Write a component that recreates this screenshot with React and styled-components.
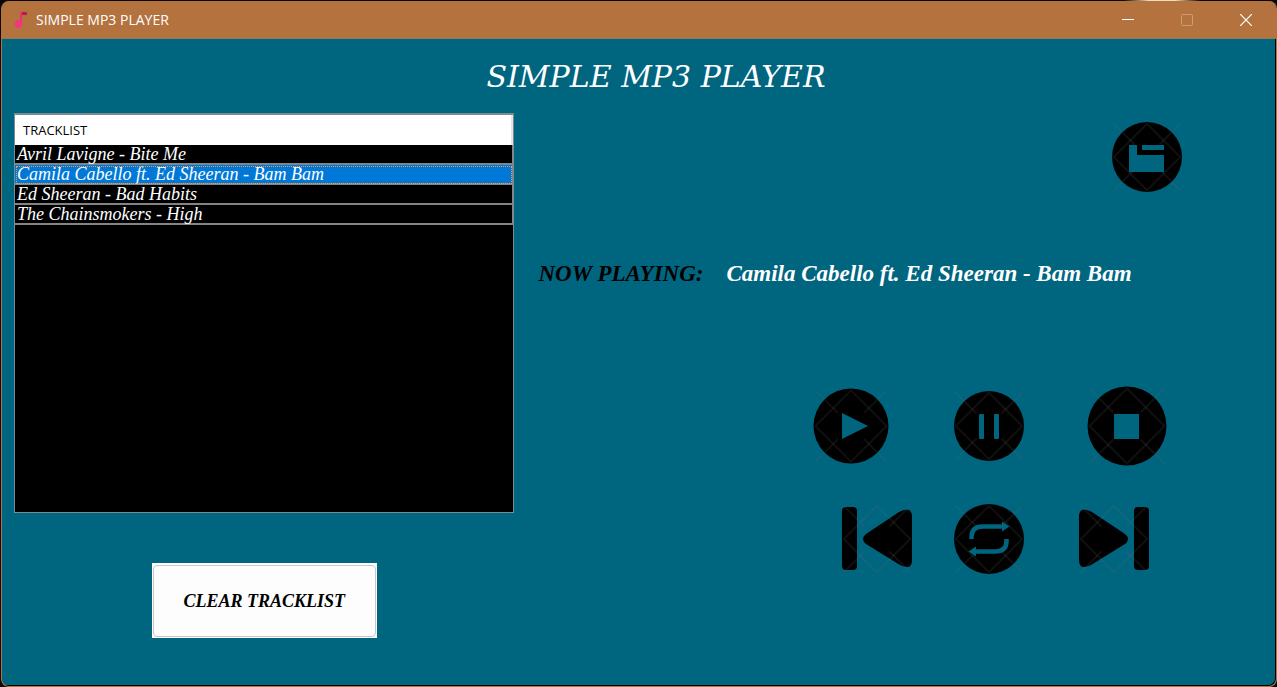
import React, { useState } from "react";
import styled, { createGlobalStyle } from "styled-components";

const teal = "#00657f";
const copper = "#b4733e";
const serif = '"Liberation Serif", "Times New Roman", serif';
const sans = '"Open Sans", "Noto Sans", sans-serif';

const GlobalStyle = createGlobalStyle`
  *, *::before, *::after { box-sizing: border-box; }
  body { margin: 0; background: #0b0806; }
`;

const Desktop = styled.div`
  display: flex;
  min-height: 100vh;
  padding: 1px 0 0 1px;
  background: linear-gradient(to right, transparent 88%, #f3dcc0 90%, #f3dcc0 92%, transparent 94%) top / 100% 1px no-repeat, #0b0806;
`;

const Window = styled.div`
  flex: 1;
  display: flex;
  flex-direction: column;
  overflow: hidden;
  border: 1px solid ${copper};
  border-top: 0;
  border-radius: 8px;
  background: ${teal};
`;

const TitleBar = styled.header`
  display: flex;
  align-items: center;
  height: 38px;
  padding: 0 1px 0 12px;
  background: ${copper};
  border-bottom: 1px solid #8a7b5c;
  color: #fff;
`;

const WindowTitle = styled.span`
  flex: 1;
  margin-left: 8px;
  font: 14px/20px ${sans};
`;

const CaptionButton = styled.button`
  display: grid;
  place-items: center;
  width: 59px;
  height: 38px;
  padding: 0;
  border: 0;
  background: none;
  color: #fff;
  opacity: ${(p) => (p.disabled ? 0.3 : 1)};
`;

const Content = styled.main`
  flex: 1;
  padding: 20px 88px 46px 12px;
  border: solid #000;
  border-width: 0 1px 1px 0;
  border-radius: 0 0 8px 0;
`;

const Heading = styled.h1`
  margin: 0 0 18px;
  padding-left: 111px;
  text-align: center;
  font: italic 30px/36px "DejaVu Serif", serif;
  color: #fff;
`;

const Columns = styled.div`
  display: grid;
  grid-template-columns: minmax(0, 500fr) minmax(0, 648fr);
  column-gap: 24px;
`;

const ListColumn = styled.section`
  display: flex;
  flex-direction: column;
  align-items: center;
  gap: 50px;
`;

const TrackPanel = styled.div`
  width: 100%;
  min-height: 400px;
  border: 1px solid #7b8a93;
  border-top-width: 2px;
  background: #000;
`;

const TrackTable = styled.table`
  width: 100%;
  border-collapse: separate;
  border-spacing: 0;
`;

const TrackHeader = styled.th`
  height: 30px;
  padding: 0 8px;
  border-right: 2px solid #e4e4e4;
  background: #fff;
  color: #000;
  text-align: left;
  font: 13px/18px ${sans};
`;

const TrackCell = styled.td`
  height: 20px;
  padding: 0 2px;
  border: solid #848484;
  border-width: 0 1px 2px 0;
  outline: ${(p) => (p.$selected ? "1px dotted #e0a068" : "none")};
  outline-offset: ${(p) => (p.$selected ? "-2px" : "0")};
  background: ${(p) => (p.$selected ? "#0078d7" : "#000")};
  color: #fff;
  font: italic 18px/18px ${serif};
  white-space: nowrap;
  cursor: default;
`;

const ClearButton = styled.button`
  width: 225px;
  padding: 2px 1px 1px;
  border: 0;
  background: #fff;
  color: #000;
  font: italic bold 18px/24px ${serif};
`;

const ClearFace = styled.span`
  display: block;
  padding: 23px 0;
  border: 1px solid #c3c8cb;
  border-radius: 4px;
  background: #fdfdfd;
`;

const PlayerColumn = styled.section`
  display: flex;
  flex-direction: column;
  align-items: flex-end;
  padding-top: 4px;
`;

const NowPlaying = styled.p`
  display: flex;
  align-self: stretch;
  gap: 23px;
  margin: 63px 0 98px;
  font: italic bold 23px/28px ${serif};
  color: #fff;
  white-space: nowrap;
`;

const NowLabel = styled.span`
  color: #000;
`;

const Controls = styled.div`
  display: flex;
  flex-direction: column;
  align-items: center;
  gap: 33px;
  margin-right: 20px;
`;

const ControlRow = styled.div`
  display: flex;
  gap: ${(p) => p.$gap}px;
`;

const IconButton = styled.button`
  display: block;
  padding: 0;
  border: 0;
  background: none;
  line-height: 0;
`;

function Lattice({ x = 40, y = 40, r = 37 }) {
  const a = r * 0.95;
  const near = r * 0.35;
  const corner = [
    [-1, -1],
    [1, -1],
    [1, 1],
    [-1, 1],
  ];
  return (
    <g fill="none" stroke="#707070" strokeOpacity="0.14" strokeWidth="2">
      <path d={`M${x} ${y - a}L${x + a} ${y}L${x} ${y + a}L${x - a} ${y}Z`} />
      {corner.map(([sx, sy]) => (
        <path key={`${sx}${sy}`} d={`M${x + sx * a} ${y + sy * a}L${x + sx * near} ${y + sy * near}`} />
      ))}
    </g>
  );
}

function ControlIcon({ label, width = 80, cx = 40, radius, onClick, children }) {
  return (
    <IconButton type="button" aria-label={label} onClick={onClick}>
      <svg width={width} height="80" viewBox={`0 0 ${width} 80`} aria-hidden="true">
        {radius && <circle cx={cx} cy="40" r={radius} fill="#000" />}
        {!radius && children}
        <Lattice x={cx} r={radius || 35} />
        {radius && children}
      </svg>
    </IconButton>
  );
}

const repeatArm = (
  <>
    <path d="M27.500 40V38Q27.500 27.500 39 27.500H60" fill="none" stroke={teal} strokeWidth="4.500" />
    <path d="M58 22.500L65.500 27.500L58 32.500Z" fill={teal} />
  </>
);

const tracks = [
  "Avril Lavigne - Bite Me",
  "Camila Cabello ft. Ed Sheeran - Bam Bam",
  "Ed Sheeran - Bad Habits",
  "The Chainsmokers - High",
];

export default function App() {
  const [list, setList] = useState(tracks);
  const [current, setCurrent] = useState(1);
  const step = (n) => list.length && setCurrent((current + n + list.length) % list.length);

  return (
    <>
      <GlobalStyle />
      <Desktop>
        <Window>
          <TitleBar>
            <svg width="14" height="18" viewBox="0 0 14 18" aria-hidden="true">
              <path d="M6 1H8V14H6Z" fill="#e8316f" />
              <path d="M8 1H12.500Q13 1 13 2V4H8Z" fill="#b51f45" />
              <circle cx="4.500" cy="13" r="3.900" fill="#f0387a" />
            </svg>
            <WindowTitle>SIMPLE MP3 PLAYER</WindowTitle>
            <CaptionButton type="button" aria-label="Minimize">
              <svg width="12" height="12" viewBox="0 0 12 12"><path d="M0 5.500H12" stroke="currentColor" /></svg>
            </CaptionButton>
            <CaptionButton type="button" aria-label="Maximize" disabled>
              <svg width="12" height="12" viewBox="0 0 12 12"><rect x=".5" y=".5" width="11" height="11" rx="1" fill="none" stroke="currentColor" /></svg>
            </CaptionButton>
            <CaptionButton type="button" aria-label="Close">
              <svg width="12" height="12" viewBox="0 0 12 12"><path d="M0 0L12 12M12 0L0 12" stroke="currentColor" strokeWidth="1.200" /></svg>
            </CaptionButton>
          </TitleBar>
          <Content>
            <Heading>SIMPLE MP3 PLAYER</Heading>
            <Columns>
              <ListColumn>
                <TrackPanel>
                  <TrackTable>
                    <thead>
                      <tr><TrackHeader scope="col">TRACKLIST</TrackHeader></tr>
                    </thead>
                    <tbody>
                      {list.map((name, i) => (
                        <tr key={name} onClick={() => setCurrent(i)}>
                          <TrackCell $selected={i === current}>{name}</TrackCell>
                        </tr>
                      ))}
                    </tbody>
                  </TrackTable>
                </TrackPanel>
                <ClearButton type="button" onClick={() => setList([])}>
                  <ClearFace>CLEAR TRACKLIST</ClearFace>
                </ClearButton>
              </ListColumn>
              <PlayerColumn>
                <ControlIcon label="Open folder" radius={35}>
                  <path d="M22 28H30V38H57V55H22ZM35 28H57V33H35Z" fill={teal} />
                </ControlIcon>
                <NowPlaying>
                  <NowLabel>NOW PLAYING:</NowLabel>
                  <span>{list[current]}</span>
                </NowPlaying>
                <Controls>
                  <ControlRow $gap={58}>
                    <ControlIcon label="Play" radius={37.5}>
                      <path d="M31 27L57 40L31 53Z" fill={teal} />
                    </ControlIcon>
                    <ControlIcon label="Pause" radius={35}>
                      <path d="M30 29Q30 28 31 28H34Q35 28 35 29V52Q35 53 34 53H31Q30 53 30 52ZM45 29Q45 28 46 28H49Q50 28 50 29V52Q50 53 49 53H46Q45 53 45 52Z" fill={teal} />
                    </ControlIcon>
                    <ControlIcon label="Stop" radius={39.5}>
                      <path d="M27 28H52V53H27Z" fill={teal} />
                    </ControlIcon>
                  </ControlRow>
                  <ControlRow $gap={32}>
                    <ControlIcon label="Previous" width={90} cx={55} onClick={() => step(-1)}>
                      <rect x="20" y="8" width="15" height="63" rx="4" />
                      <path d="M44 35L77 13Q90 6 90 18V61Q90 72 78 66L44 45Q38 40 44 35Z" />
                    </ControlIcon>
                    <ControlIcon label="Repeat" width={90} cx={45} radius={35}>
                      {repeatArm}
                      <g transform="rotate(180 45 40)">{repeatArm}</g>
                    </ControlIcon>
                    <ControlIcon label="Next" width={90} cx={48} onClick={() => step(1)}>
                      <rect x="68" y="8" width="15" height="63" rx="4" />
                      <path d="M59 35L26 13Q13 6 13 18V61Q13 72 25 66L59 45Q65 40 59 35Z" />
                    </ControlIcon>
                  </ControlRow>
                </Controls>
              </PlayerColumn>
            </Columns>
          </Content>
        </Window>
      </Desktop>
    </>
  );
}
